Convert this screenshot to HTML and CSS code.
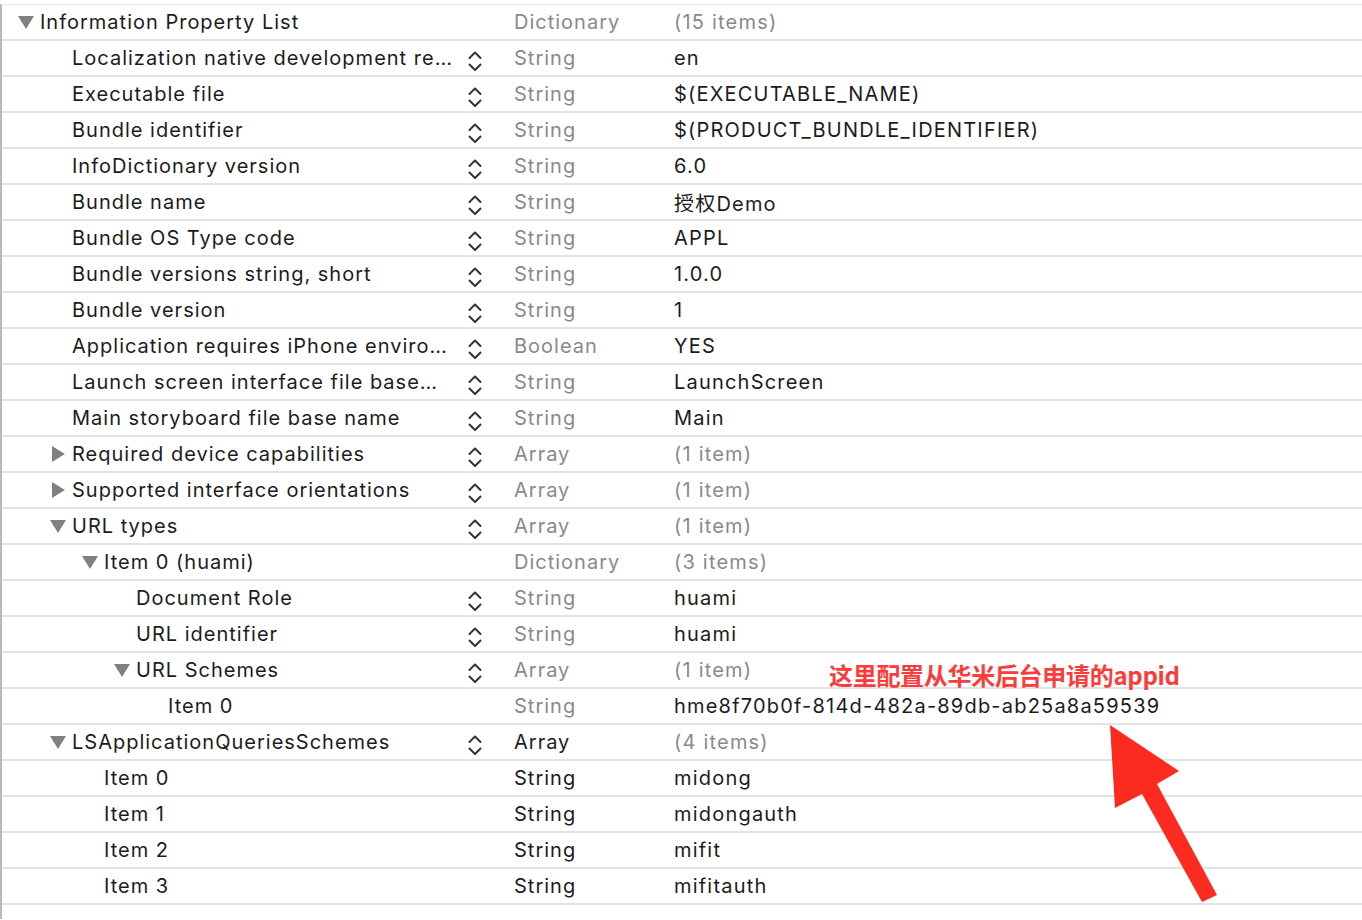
FILE: index.html
```html
<!DOCTYPE html>
<html lang="zh">
<head>
<meta charset="utf-8">
<title>Info.plist</title>
<link rel="stylesheet" href="styles.css">
</head>
<body>
<div class="plist">
  <div class="row">
    <div class="key l0"><span class="tri down"></span><span class="name">Information Property List</span></div>
    <div class="step"></div>
    <div class="type grey">Dictionary</div>
    <div class="val grey">(15 items)</div>
  </div>
  <div class="row">
    <div class="key l1"><span class="tri"></span><span class="name">Localization native development re…</span></div>
    <div class="step"><svg viewBox="0 0 16 24" width="16" height="24"><polyline points="2.5,9 8,3.5 13.5,9"/><polyline points="2.5,15.5 8,21 13.5,15.5"/></svg></div>
    <div class="type grey">String</div>
    <div class="val">en</div>
  </div>
  <div class="row">
    <div class="key l1"><span class="tri"></span><span class="name">Executable file</span></div>
    <div class="step"><svg viewBox="0 0 16 24" width="16" height="24"><polyline points="2.5,9 8,3.5 13.5,9"/><polyline points="2.5,15.5 8,21 13.5,15.5"/></svg></div>
    <div class="type grey">String</div>
    <div class="val">$(EXECUTABLE_NAME)</div>
  </div>
  <div class="row">
    <div class="key l1"><span class="tri"></span><span class="name">Bundle identifier</span></div>
    <div class="step"><svg viewBox="0 0 16 24" width="16" height="24"><polyline points="2.5,9 8,3.5 13.5,9"/><polyline points="2.5,15.5 8,21 13.5,15.5"/></svg></div>
    <div class="type grey">String</div>
    <div class="val">$(PRODUCT_BUNDLE_IDENTIFIER)</div>
  </div>
  <div class="row">
    <div class="key l1"><span class="tri"></span><span class="name">InfoDictionary version</span></div>
    <div class="step"><svg viewBox="0 0 16 24" width="16" height="24"><polyline points="2.5,9 8,3.5 13.5,9"/><polyline points="2.5,15.5 8,21 13.5,15.5"/></svg></div>
    <div class="type grey">String</div>
    <div class="val">6.0</div>
  </div>
  <div class="row">
    <div class="key l1"><span class="tri"></span><span class="name">Bundle name</span></div>
    <div class="step"><svg viewBox="0 0 16 24" width="16" height="24"><polyline points="2.5,9 8,3.5 13.5,9"/><polyline points="2.5,15.5 8,21 13.5,15.5"/></svg></div>
    <div class="type grey">String</div>
    <div class="val">授权Demo</div>
  </div>
  <div class="row">
    <div class="key l1"><span class="tri"></span><span class="name">Bundle OS Type code</span></div>
    <div class="step"><svg viewBox="0 0 16 24" width="16" height="24"><polyline points="2.5,9 8,3.5 13.5,9"/><polyline points="2.5,15.5 8,21 13.5,15.5"/></svg></div>
    <div class="type grey">String</div>
    <div class="val">APPL</div>
  </div>
  <div class="row">
    <div class="key l1"><span class="tri"></span><span class="name">Bundle versions string, short</span></div>
    <div class="step"><svg viewBox="0 0 16 24" width="16" height="24"><polyline points="2.5,9 8,3.5 13.5,9"/><polyline points="2.5,15.5 8,21 13.5,15.5"/></svg></div>
    <div class="type grey">String</div>
    <div class="val">1.0.0</div>
  </div>
  <div class="row">
    <div class="key l1"><span class="tri"></span><span class="name">Bundle version</span></div>
    <div class="step"><svg viewBox="0 0 16 24" width="16" height="24"><polyline points="2.5,9 8,3.5 13.5,9"/><polyline points="2.5,15.5 8,21 13.5,15.5"/></svg></div>
    <div class="type grey">String</div>
    <div class="val">1</div>
  </div>
  <div class="row">
    <div class="key l1"><span class="tri"></span><span class="name">Application requires iPhone enviro…</span></div>
    <div class="step"><svg viewBox="0 0 16 24" width="16" height="24"><polyline points="2.5,9 8,3.5 13.5,9"/><polyline points="2.5,15.5 8,21 13.5,15.5"/></svg></div>
    <div class="type grey">Boolean</div>
    <div class="val">YES</div>
  </div>
  <div class="row">
    <div class="key l1"><span class="tri"></span><span class="name">Launch screen interface file base…</span></div>
    <div class="step"><svg viewBox="0 0 16 24" width="16" height="24"><polyline points="2.5,9 8,3.5 13.5,9"/><polyline points="2.5,15.5 8,21 13.5,15.5"/></svg></div>
    <div class="type grey">String</div>
    <div class="val">LaunchScreen</div>
  </div>
  <div class="row">
    <div class="key l1"><span class="tri"></span><span class="name">Main storyboard file base name</span></div>
    <div class="step"><svg viewBox="0 0 16 24" width="16" height="24"><polyline points="2.5,9 8,3.5 13.5,9"/><polyline points="2.5,15.5 8,21 13.5,15.5"/></svg></div>
    <div class="type grey">String</div>
    <div class="val">Main</div>
  </div>
  <div class="row">
    <div class="key l1"><span class="tri right"></span><span class="name">Required device capabilities</span></div>
    <div class="step"><svg viewBox="0 0 16 24" width="16" height="24"><polyline points="2.5,9 8,3.5 13.5,9"/><polyline points="2.5,15.5 8,21 13.5,15.5"/></svg></div>
    <div class="type grey">Array</div>
    <div class="val grey">(1 item)</div>
  </div>
  <div class="row">
    <div class="key l1"><span class="tri right"></span><span class="name">Supported interface orientations</span></div>
    <div class="step"><svg viewBox="0 0 16 24" width="16" height="24"><polyline points="2.5,9 8,3.5 13.5,9"/><polyline points="2.5,15.5 8,21 13.5,15.5"/></svg></div>
    <div class="type grey">Array</div>
    <div class="val grey">(1 item)</div>
  </div>
  <div class="row">
    <div class="key l1"><span class="tri down"></span><span class="name">URL types</span></div>
    <div class="step"><svg viewBox="0 0 16 24" width="16" height="24"><polyline points="2.5,9 8,3.5 13.5,9"/><polyline points="2.5,15.5 8,21 13.5,15.5"/></svg></div>
    <div class="type grey">Array</div>
    <div class="val grey">(1 item)</div>
  </div>
  <div class="row">
    <div class="key l2"><span class="tri down"></span><span class="name">Item 0 (huami)</span></div>
    <div class="step"></div>
    <div class="type grey">Dictionary</div>
    <div class="val grey">(3 items)</div>
  </div>
  <div class="row">
    <div class="key l3"><span class="tri"></span><span class="name">Document Role</span></div>
    <div class="step"><svg viewBox="0 0 16 24" width="16" height="24"><polyline points="2.5,9 8,3.5 13.5,9"/><polyline points="2.5,15.5 8,21 13.5,15.5"/></svg></div>
    <div class="type grey">String</div>
    <div class="val">huami</div>
  </div>
  <div class="row">
    <div class="key l3"><span class="tri"></span><span class="name">URL identifier</span></div>
    <div class="step"><svg viewBox="0 0 16 24" width="16" height="24"><polyline points="2.5,9 8,3.5 13.5,9"/><polyline points="2.5,15.5 8,21 13.5,15.5"/></svg></div>
    <div class="type grey">String</div>
    <div class="val">huami</div>
  </div>
  <div class="row">
    <div class="key l3"><span class="tri down"></span><span class="name">URL Schemes</span></div>
    <div class="step"><svg viewBox="0 0 16 24" width="16" height="24"><polyline points="2.5,9 8,3.5 13.5,9"/><polyline points="2.5,15.5 8,21 13.5,15.5"/></svg></div>
    <div class="type grey">Array</div>
    <div class="val grey">(1 item)</div>
  </div>
  <div class="row">
    <div class="key l4"><span class="tri"></span><span class="name">Item 0</span></div>
    <div class="step"></div>
    <div class="type grey">String</div>
    <div class="val">hme8f70b0f-814d-482a-89db-ab25a8a59539</div>
  </div>
  <div class="row">
    <div class="key l1"><span class="tri down"></span><span class="name">LSApplicationQueriesSchemes</span></div>
    <div class="step"><svg viewBox="0 0 16 24" width="16" height="24"><polyline points="2.5,9 8,3.5 13.5,9"/><polyline points="2.5,15.5 8,21 13.5,15.5"/></svg></div>
    <div class="type">Array</div>
    <div class="val grey">(4 items)</div>
  </div>
  <div class="row">
    <div class="key l2"><span class="tri"></span><span class="name">Item 0</span></div>
    <div class="step"></div>
    <div class="type">String</div>
    <div class="val">midong</div>
  </div>
  <div class="row">
    <div class="key l2"><span class="tri"></span><span class="name">Item 1</span></div>
    <div class="step"></div>
    <div class="type">String</div>
    <div class="val">midongauth</div>
  </div>
  <div class="row">
    <div class="key l2"><span class="tri"></span><span class="name">Item 2</span></div>
    <div class="step"></div>
    <div class="type">String</div>
    <div class="val">mifit</div>
  </div>
  <div class="row">
    <div class="key l2"><span class="tri"></span><span class="name">Item 3</span></div>
    <div class="step"></div>
    <div class="type">String</div>
    <div class="val">mifitauth</div>
  </div>
</div>
<div class="note">这里配置从华米后台申请的appid</div>
<svg class="arrow" width="1362" height="920" viewBox="0 0 1362 920">
  <polygon points="1110,725 1179,771 1157,784 1217,895 1202,902 1142,794 1115,808" fill="#fc2b20"/>
</svg>
</body>
</html>
```

FILE: styles.css
```css
html, body {
  margin: 0;
  padding: 0;
  background: #ffffff;
}
body {
  width: 1362px;
  height: 920px;
  overflow: hidden;
  position: relative;
  font-family: Inter, "Noto Sans", "Noto Sans CJK SC", sans-serif;
  font-size: 20px;
  letter-spacing: 1px;
  color: #1c1c1c;
}
.plist {
  margin-top: 4px;
  border-top: 1px solid #e6e6e6;
  border-left: 2px solid #b9b9b9;
  height: 915px;
  box-sizing: border-box;
}
.row {
  display: flex;
  align-items: center;
  height: 36px;
  border-bottom: 2px solid #e3e3e3;
  box-sizing: border-box;
}
.key {
  width: 462px;
  display: flex;
  align-items: center;
  white-space: nowrap;
  overflow: hidden;
  box-sizing: border-box;
}
.l0 { padding-left: 16px; }
.l1 { padding-left: 48px; }
.l2 { padding-left: 80px; }
.l3 { padding-left: 112px; }
.l4 { padding-left: 144px; }
.tri {
  width: 22px;
  height: 20px;
  flex: none;
  position: relative;
}
.tri.down::before {
  content: "";
  position: absolute;
  left: 0;
  top: 4px;
  border-left: 8px solid transparent;
  border-right: 8px solid transparent;
  border-top: 13px solid #808080;
}
.tri.right::before {
  content: "";
  position: absolute;
  left: 2px;
  top: 2px;
  border-top: 8px solid transparent;
  border-bottom: 8px solid transparent;
  border-left: 13px solid #808080;
}
.step {
  width: 50px;
  height: 24px;
  flex: none;
  padding-left: 3px;
  box-sizing: border-box;
}
.step svg {
  display: block;
  margin-top: 3px;
  fill: none;
  stroke: #333333;
  stroke-width: 2;
  stroke-linecap: round;
  stroke-linejoin: round;
}
.type {
  width: 160px;
  flex: none;
}
.val {
  flex: 1;
  white-space: nowrap;
  letter-spacing: 1.2px;
}
.grey {
  color: #8a8a8a;
}
.note {
  position: absolute;
  left: 829px;
  top: 658px;
  font-family: "Noto Sans CJK SC", "Noto Sans", sans-serif;
  font-weight: 700;
  font-size: 24px;
  line-height: 34px;
  letter-spacing: -0.3px;
  color: #fc3b3b;
  white-space: nowrap;
}
.arrow {
  position: absolute;
  left: 0;
  top: 0;
  pointer-events: none;
}
```
